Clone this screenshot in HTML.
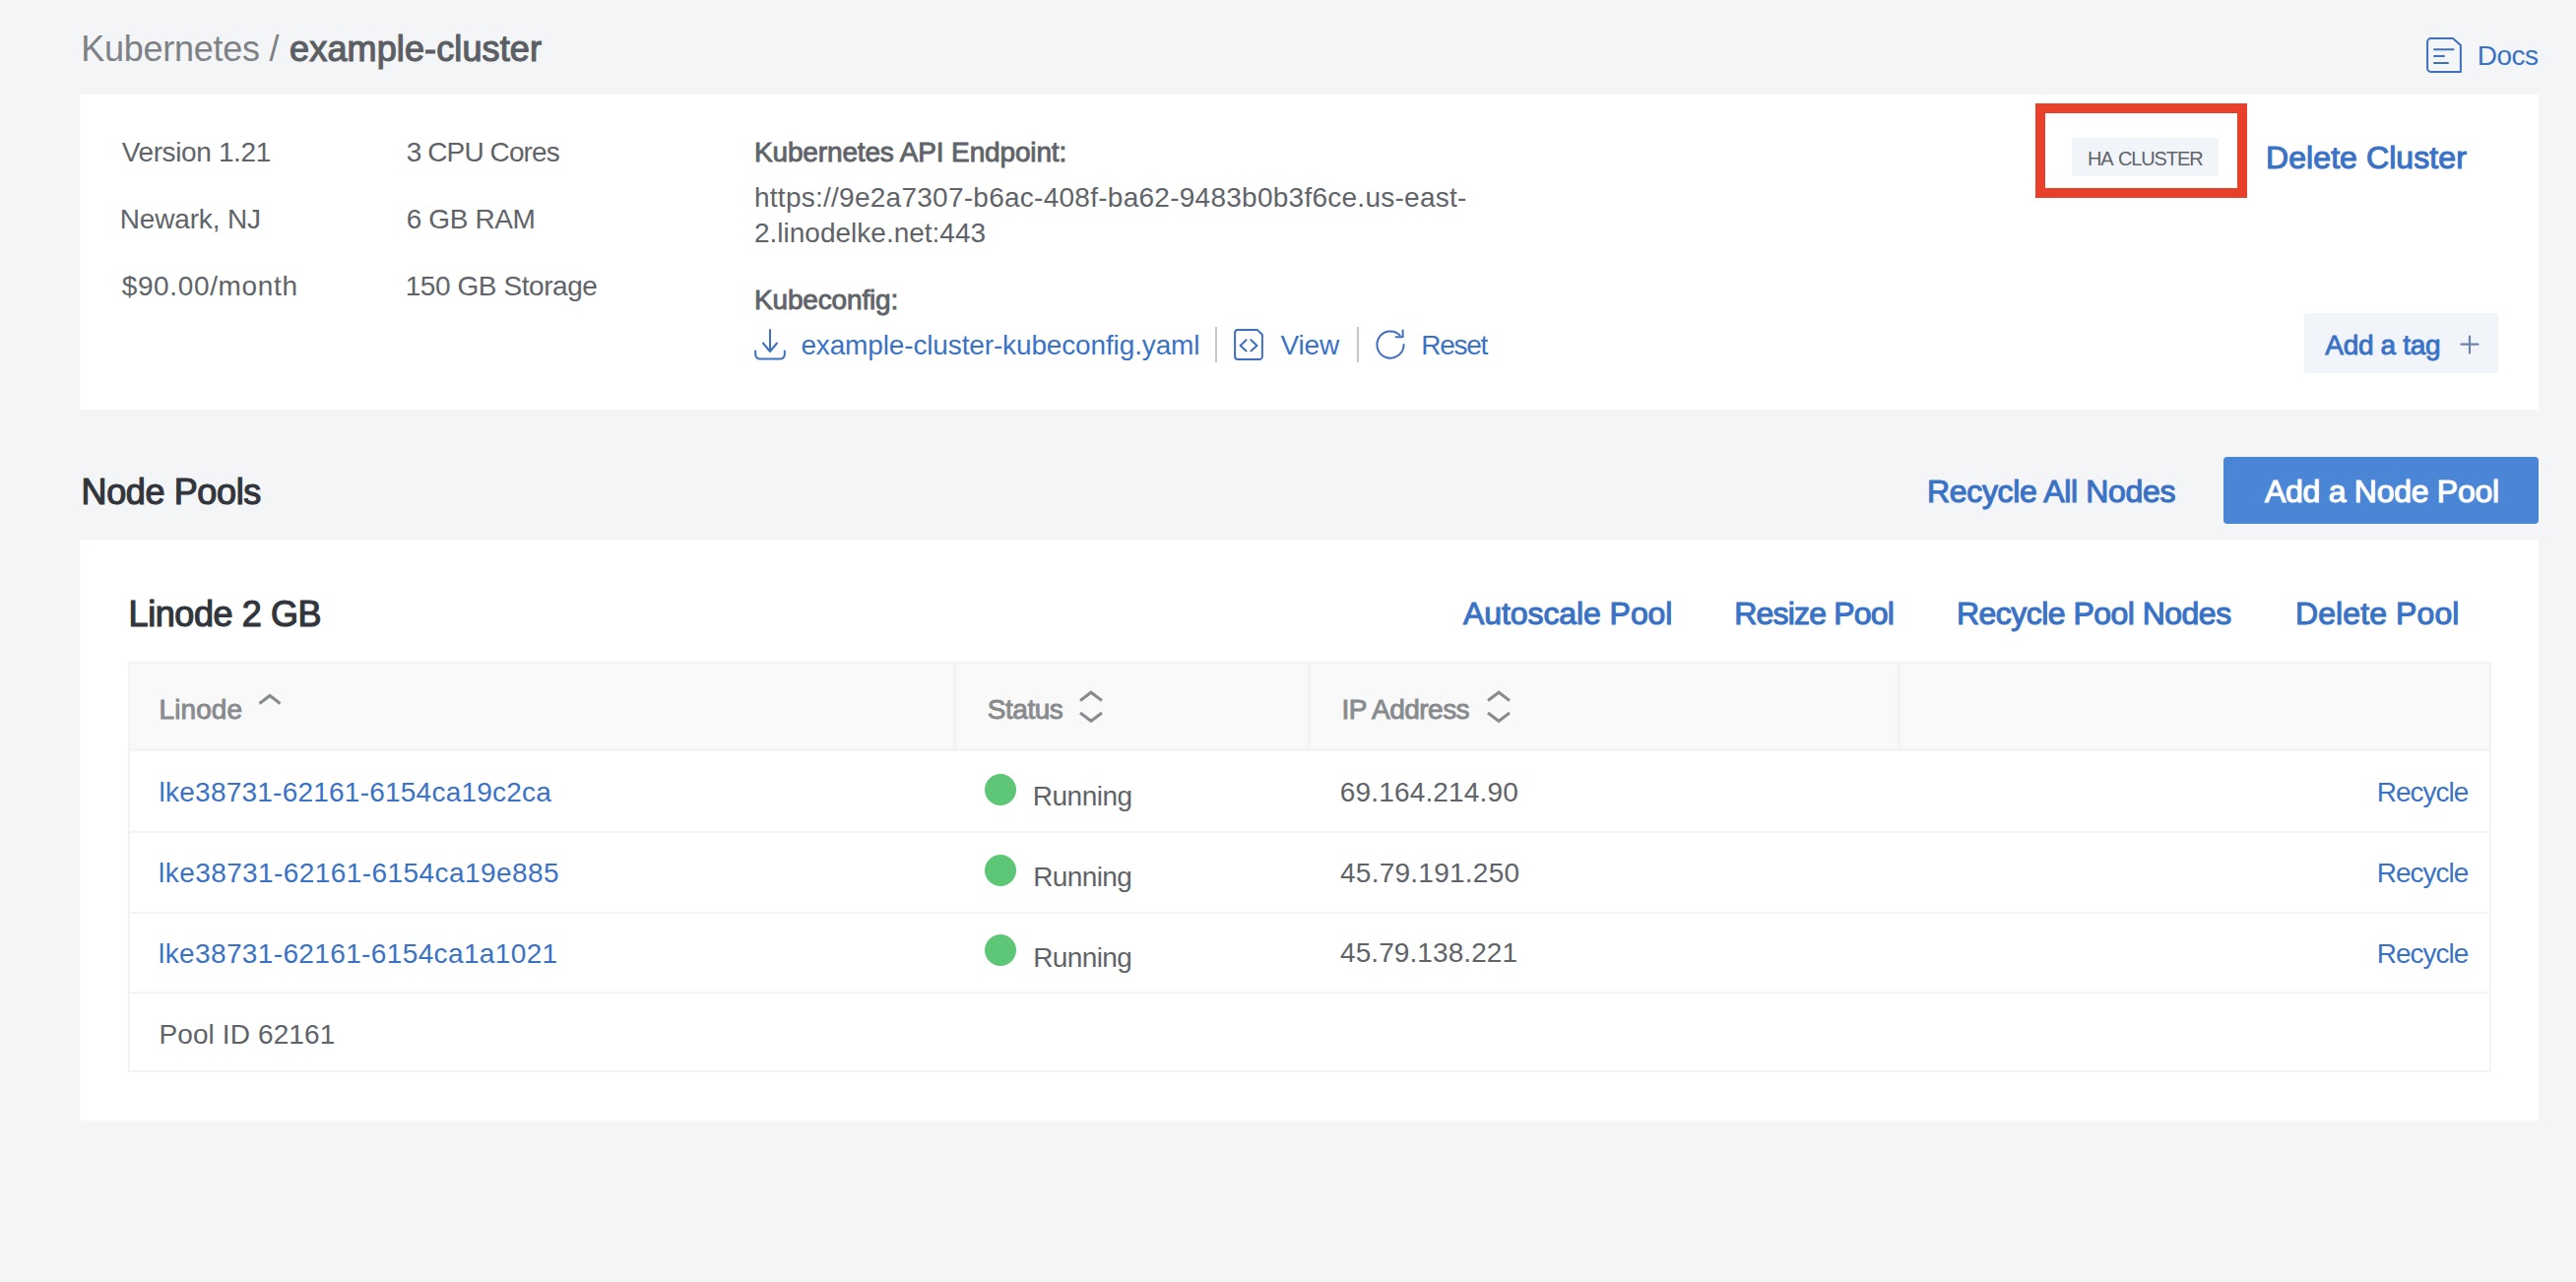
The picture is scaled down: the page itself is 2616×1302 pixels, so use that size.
<!DOCTYPE html>
<html><head><meta charset="utf-8">
<style>
html,body{margin:0;padding:0;}
body{width:2616px;height:1302px;background:#f4f5f6;position:relative;overflow:hidden;font-family:"Liberation Sans",sans-serif;color:#606469;}
.t{position:absolute;white-space:nowrap;line-height:1;}
.b{font-weight:bold;}
.sb{-webkit-text-stroke-width:1.1px;}
.sb28{-webkit-text-stroke-width:0.9px;}
.sb36{-webkit-text-stroke-width:1.2px;}
.blue{color:#3a72c6;}
.card{position:absolute;background:#fff;}
svg{position:absolute;overflow:visible;}
</style></head><body>

<!-- breadcrumb -->
<div class="t" id="bc1" style="left:82.3px;top:32px;font-size:36px;color:#7e8286;letter-spacing:-0.27px;">Kubernetes /</div>
<div class="t sb36" id="bc2" style="left:294.1px;top:32px;font-size:36px;color:#5b5f64;letter-spacing:0.13px;">example-cluster</div>

<!-- docs -->
<svg style="left:2464px;top:38px" width="36" height="36" viewBox="0 0 36 36" fill="none" stroke="#3f70bf" stroke-width="2" stroke-linecap="round" stroke-linejoin="round">
<path d="M4.5 1.1 H27 L34.9 8 V34.9 H4.5 A3.4 3.4 0 0 1 1.1 31.5 V4.5 A3.4 3.4 0 0 1 4.5 1.1 Z"/>
<path d="M8 12.3 H27.5 M8 19 H18 M8 26 H22"/>
</svg>
<div class="t blue" id="docs" style="left:2515.8px;top:43px;font-size:28px;letter-spacing:-0.57px;">Docs</div>

<!-- card 1 -->
<div class="card" style="left:81px;top:96px;width:2497px;height:320px;"></div>

<div class="t" id="i1" style="left:123.7px;top:141px;font-size:28px;letter-spacing:-0.37px;">Version 1.21</div>
<div class="t" id="i2" style="left:121.7px;top:209px;font-size:28px;letter-spacing:-0.16px;">Newark, NJ</div>
<div class="t" id="i3" style="left:123.7px;top:277px;font-size:28px;letter-spacing:0.64px;">$90.00/month</div>
<div class="t" id="i4" style="left:412.7px;top:141px;font-size:28px;letter-spacing:-0.89px;">3 CPU Cores</div>
<div class="t" id="i5" style="left:412.7px;top:209px;font-size:28px;letter-spacing:-0.37px;">6 GB RAM</div>
<div class="t" id="i6" style="left:411.7px;top:277px;font-size:28px;letter-spacing:-0.43px;">150 GB Storage</div>

<div class="t sb28" id="ep" style="left:766.0px;top:141px;font-size:28px;letter-spacing:-0.15px;">Kubernetes API Endpoint:</div>
<div class="t" id="url1" style="left:766.0px;top:187px;font-size:28px;letter-spacing:0.26px;">https://9e2a7307-b6ac-408f-ba62-9483b0b3f6ce.us-east-</div>
<div class="t" id="url2" style="left:766.0px;top:223px;font-size:28px;letter-spacing:0.00px;">2.linodelke.net:443</div>
<div class="t sb28" id="kc" style="left:766.0px;top:291px;font-size:28px;letter-spacing:-0.16px;">Kubeconfig:</div>

<svg style="left:766px;top:334px" width="32" height="32" viewBox="0 0 32 32" fill="none" stroke="#3f70bf" stroke-width="2" stroke-linecap="round" stroke-linejoin="round">
<path d="M16 1 V23 M9 14.5 L16 23 L23 14.5"/>
<path d="M1.2 22.5 V26 A4.5 4.5 0 0 0 5.7 30.6 H26.3 A4.5 4.5 0 0 0 30.8 26 V22.5"/>
</svg>
<div class="t blue" id="kcf" style="left:813.4px;top:337px;font-size:28px;letter-spacing:-0.14px;">example-cluster-kubeconfig.yaml</div>
<div style="position:absolute;left:1234px;top:332px;width:2px;height:36px;background:#c6c7c9;"></div>
<svg style="left:1253px;top:334px" width="30" height="32" viewBox="0 0 30 32" fill="none" stroke="#3f70bf" stroke-width="2" stroke-linecap="round" stroke-linejoin="round">
<path d="M4 1.1 H24 L28.9 6 V28 A3 3 0 0 1 25.9 31 H4 A3 3 0 0 1 1.1 28 V4 A3 3 0 0 1 4 1.1 Z"/>
<path d="M12.6 11.3 L6.6 16.9 L12.6 22.4 M17.4 11.3 L23.5 16.9 L17.4 22.4"/>
</svg>
<div class="t blue" id="view" style="left:1300.4px;top:337px;font-size:28px;letter-spacing:-0.09px;">View</div>
<div style="position:absolute;left:1378px;top:332px;width:2px;height:36px;background:#c6c7c9;"></div>
<svg style="left:1397px;top:335px" width="30" height="30" viewBox="0 0 30 30" fill="none" stroke="#3f70bf" stroke-width="2" stroke-linecap="round" stroke-linejoin="round">
<path d="M28.6 15 A13.6 13.6 0 1 1 24.6 5.4"/>
<path d="M27.6 0.6 V7.2 H20.6"/>
</svg>
<div class="t blue" id="reset" style="left:1443.3px;top:337px;font-size:28px;letter-spacing:-1.32px;">Reset</div>

<!-- HA chip + red box -->
<div style="position:absolute;left:2104px;top:140px;width:149px;height:39px;background:#f1f4f8;"></div>
<div class="t" id="ha" style="left:2120.0px;top:151px;font-size:20px;color:#606469;letter-spacing:-1.11px;word-spacing:2px;">HA CLUSTER</div>
<div style="position:absolute;left:2067px;top:105px;width:195px;height:76px;border:10px solid #e8402a;"></div>
<div class="t sb blue" id="del" style="left:2301.0px;top:144px;font-size:32px;letter-spacing:0.08px;">Delete Cluster</div>

<!-- tag button -->
<div style="position:absolute;left:2340px;top:318px;width:197px;height:61px;background:#f1f5fa;border-radius:3px;"></div>
<div class="t sb28 blue" id="tag" style="left:2361.3px;top:337px;font-size:28px;letter-spacing:-0.33px;">Add a tag</div>
<svg style="left:2498px;top:340px" width="20" height="20" viewBox="0 0 20 20" fill="none" stroke="#6f84ad" stroke-width="2.2" stroke-linecap="round"><path d="M10 1.5 V18.5 M1.5 9.7 H18.5"/></svg>

<!-- node pools header -->
<div class="t sb36" id="np" style="left:82.5px;top:482px;font-size:36px;color:#32363c;letter-spacing:-0.37px;">Node Pools</div>
<div class="t sb blue" id="ran" style="left:1957.1px;top:483px;font-size:32px;letter-spacing:-0.35px;">Recycle All Nodes</div>
<div style="position:absolute;left:2258px;top:464px;width:320px;height:68px;background:#4a85d6;border-radius:4px;"></div>
<div class="t sb" id="anp" style="left:2300.0px;top:483px;font-size:32px;color:#fff;letter-spacing:-0.28px;">Add a Node Pool</div>

<!-- card 2 -->
<div class="card" style="left:81px;top:548px;width:2497px;height:590px;"></div>
<div class="t sb36" id="l2" style="left:130.6px;top:606px;font-size:36px;color:#32363c;letter-spacing:-0.42px;">Linode 2 GB</div>
<div class="t sb blue" id="pa1" style="left:1486.0px;top:607px;font-size:32px;letter-spacing:-0.08px;">Autoscale Pool</div>
<div class="t sb blue" id="pa2" style="left:1761.3px;top:607px;font-size:32px;letter-spacing:-0.82px;">Resize Pool</div>
<div class="t sb blue" id="pa3" style="left:1987.0px;top:607px;font-size:32px;letter-spacing:-0.53px;">Recycle Pool Nodes</div>
<div class="t sb blue" id="pa4" style="left:2331.0px;top:607px;font-size:32px;letter-spacing:0.10px;">Delete Pool</div>

<!-- table -->
<div style="position:absolute;left:130px;top:672px;width:2396px;height:413px;border:2px solid #f3f3f3;background:#fff;"></div>
<div style="position:absolute;left:132px;top:674px;width:2396px;height:86px;background:#f9f9fa;"></div>
<div style="position:absolute;left:132px;top:760px;width:2396px;height:3px;background:#f3f4f4;"></div>
<div style="position:absolute;left:968px;top:674px;width:3px;height:86px;background:#f2f3f3;"></div>
<div style="position:absolute;left:1328px;top:674px;width:3px;height:86px;background:#f2f3f3;"></div>
<div style="position:absolute;left:1927px;top:674px;width:3px;height:86px;background:#f2f3f3;"></div>
<div style="position:absolute;left:132px;top:844px;width:2396px;height:2px;background:#f3f4f4;"></div>
<div style="position:absolute;left:132px;top:926px;width:2396px;height:2px;background:#f3f4f4;"></div>
<div style="position:absolute;left:132px;top:1007px;width:2396px;height:2px;background:#f3f4f4;"></div>

<div class="t sb28" id="h1" style="left:161.6px;top:707px;font-size:28px;color:#888b8d;letter-spacing:0.08px;">Linode</div>
<svg style="left:263px;top:706px" width="22" height="10" viewBox="0 0 22 10" fill="none" stroke="#888b8d" stroke-width="3"><path d="M0.5 8.5 L11 0.5 L21.5 8.5"/></svg>
<div class="t sb28" id="h2" style="left:1002.7px;top:707px;font-size:28px;color:#888b8d;letter-spacing:-0.44px;">Status</div>
<svg style="left:1096px;top:702px" width="24" height="32" viewBox="0 0 24 32" fill="none" stroke="#888b8d" stroke-width="3"><path d="M1 9.5 L12 1.2 L23 9.5 M1 22 L12 30.3 L23 22"/></svg>
<div class="t sb28" id="h3" style="left:1362.4px;top:707px;font-size:28px;color:#888b8d;letter-spacing:-0.52px;">IP Address</div>
<svg style="left:1510px;top:702px" width="24" height="32" viewBox="0 0 24 32" fill="none" stroke="#888b8d" stroke-width="3"><path d="M1 9.5 L12 1.2 L23 9.5 M1 22 L12 30.3 L23 22"/></svg>

<!-- rows -->
<div class="t blue" id="r1a" style="left:161.6px;top:791px;font-size:28px;letter-spacing:0.23px;">lke38731-62161-6154ca19c2ca</div>
<div style="position:absolute;left:1000px;top:786px;width:32px;height:32px;border-radius:50%;background:#5ec677;"></div>
<div class="t" id="r1b" style="left:1048.8px;top:795px;font-size:28px;letter-spacing:-0.50px;">Running</div>
<div class="t" id="r1c" style="left:1360.8px;top:791px;font-size:28px;letter-spacing:0.16px;">69.164.214.90</div>
<div class="t blue" id="r1d" style="left:2413.8px;top:791px;font-size:28px;letter-spacing:-1.00px;">Recycle</div>

<div class="t blue" id="r2a" style="left:161.1px;top:873px;font-size:28px;letter-spacing:0.42px;">lke38731-62161-6154ca19e885</div>
<div style="position:absolute;left:1000px;top:868px;width:32px;height:32px;border-radius:50%;background:#5ec677;"></div>
<div class="t" id="r2b" style="left:1049.2px;top:877px;font-size:28px;letter-spacing:-0.61px;">Running</div>
<div class="t" id="r2c" style="left:1361.0px;top:873px;font-size:28px;letter-spacing:0.25px;">45.79.191.250</div>
<div class="t blue" id="r2d" style="left:2413.8px;top:873px;font-size:28px;letter-spacing:-1.00px;">Recycle</div>

<div class="t blue" id="r3a" style="left:161.1px;top:955px;font-size:28px;letter-spacing:0.37px;">lke38731-62161-6154ca1a1021</div>
<div style="position:absolute;left:1000px;top:949px;width:32px;height:32px;border-radius:50%;background:#5ec677;"></div>
<div class="t" id="r3b" style="left:1049.2px;top:959px;font-size:28px;letter-spacing:-0.61px;">Running</div>
<div class="t" id="r3c" style="left:1361.0px;top:954px;font-size:28px;letter-spacing:0.08px;">45.79.138.221</div>
<div class="t blue" id="r3d" style="left:2413.8px;top:955px;font-size:28px;letter-spacing:-1.00px;">Recycle</div>

<div class="t" id="pid" style="left:161.4px;top:1037px;font-size:28px;letter-spacing:0.12px;">Pool ID 62161</div>

</body></html>
